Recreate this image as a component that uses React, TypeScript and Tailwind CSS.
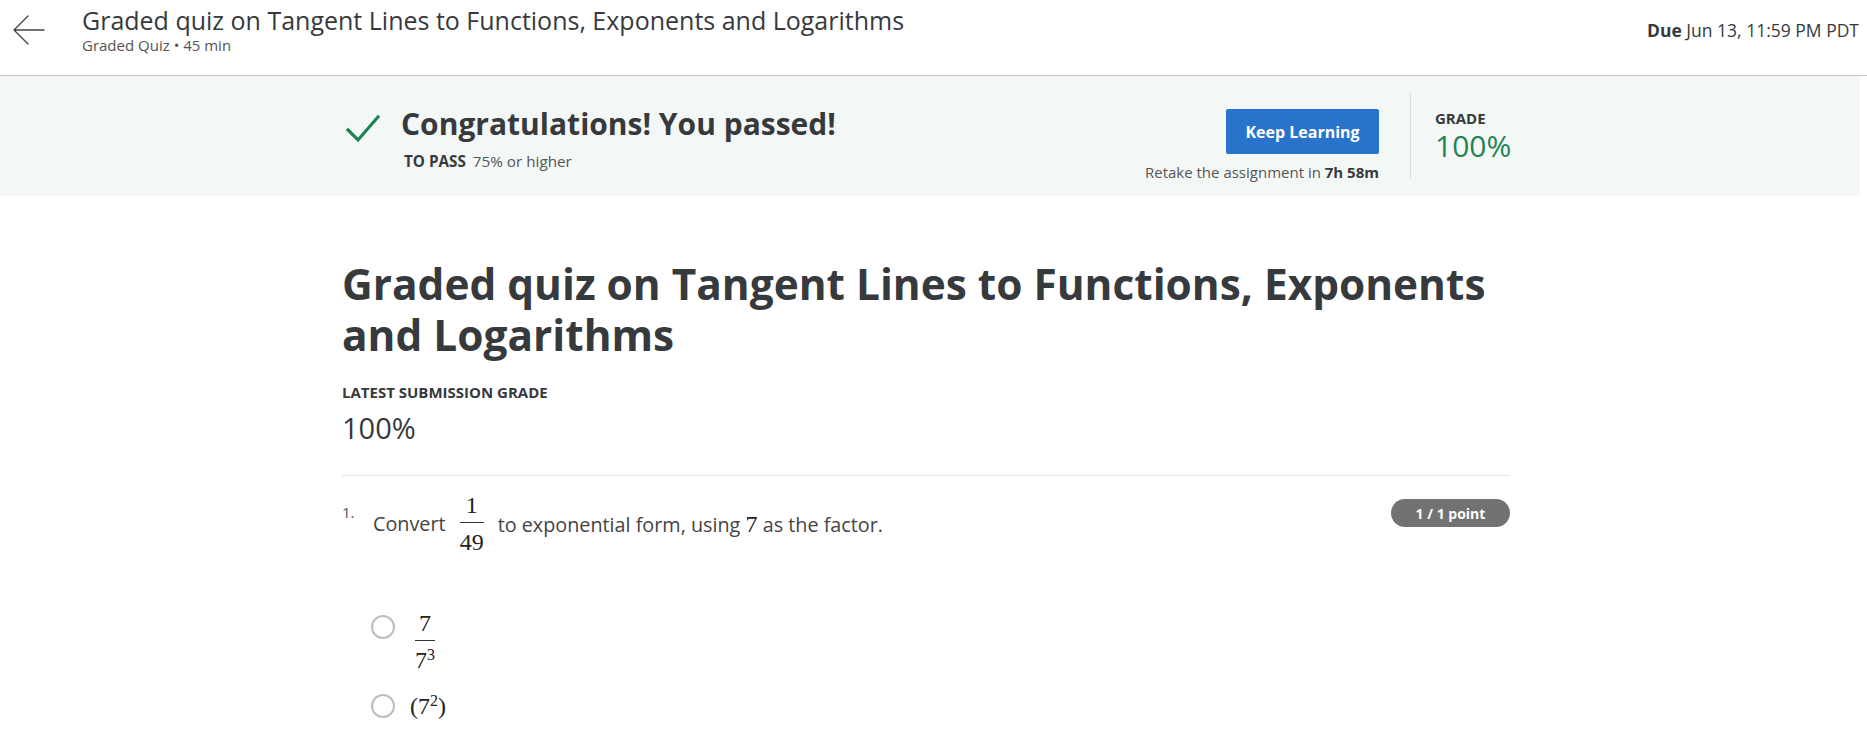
import React from "react";

const font = { fontFamily: '"Open Sans", "Noto Sans", Arial, sans-serif' };
const mathStyle = { fontFamily: '"Liberation Serif", "Times New Roman", serif' };

function Frac({ num, den, className }: { num: React.ReactNode; den: React.ReactNode; className: string }) {
  return (
    <span style={mathStyle} className={className}>
      <span className="block pb-[4px] text-center leading-[26px]">{num}</span>
      <span className="block h-[1px] w-full bg-[#333]" />
      <span className="block pt-[6px] text-center leading-[26px]">{den}</span>
    </span>
  );
}

function Radio({ className }: { className: string }) {
  return <span className={className} />;
}

export default function App() {
  return (
    <div style={font} className="min-h-[736px] w-full bg-white text-[#373a3c]">
      {/* Header */}
      <header className="flex h-[76px] items-start border-b border-[#c8c8c8]">
        <div className="flex h-[60px] w-[82px] shrink-0 items-center pl-[13px]">
          <svg width="32" height="30" viewBox="0 0 32 30" fill="none" stroke="#444" strokeWidth="1.4" strokeLinecap="round" strokeLinejoin="round">
            <path d="M31 15H2M15 1L1 15l14 14" />
          </svg>
        </div>
        <div className="flex-1 pt-[5px]">
          <div className="text-[25px] leading-[30px] text-[#373a3c]">
            Graded quiz on Tangent Lines to Functions, Exponents and Logarithms
          </div>
          <div className="text-[15px] leading-[20px] text-[#555]">Graded Quiz • 45 min</div>
        </div>
        <div className="pr-[8px] pt-[18px] text-[17.5px] leading-[24px] text-[#373a3c]">
          <span className="font-bold">Due</span> Jun 13, 11:59 PM PDT
        </div>
      </header>

      {/* Passed banner */}
      <div className="mr-[7px] h-[120px] bg-[#f3f8f6]">
        <div className="ml-[342px] flex w-[1168px] pt-[19px]">
          <div className="flex flex-1 items-start pt-[8px]">
            <svg className="ml-[2px] mt-[10px] shrink-0" width="38" height="30" viewBox="0 0 38 30" fill="none" stroke="#1f8354" strokeWidth="3.2" strokeLinecap="square">
              <path d="M4 17l10 10L34 4" />
            </svg>
            <div className="ml-[19px]">
              <div className="text-[30px] font-bold leading-[42px] text-[#373a3c]">Congratulations! You passed!</div>
              <div className="mt-[6px] pl-[3px] text-[15.25px] leading-[20px] text-[#555]">
                <span className="font-bold text-[#373a3c]">TO PASS</span>
                <span className="ml-[7px]">75% or higher</span>
              </div>
            </div>
          </div>
          <div className="flex flex-col items-end pt-[14px]">
            <button className="h-[45px] w-[153px] rounded-[2px] bg-[#2a73cc] text-[16px] font-bold text-white">
              Keep Learning
            </button>
            <div className="mt-[8px] text-[15px] leading-[20px] text-[#555]">
              Retake the assignment in <span className="font-bold text-[#373a3c]">7h 58m</span>
            </div>
          </div>
          <div className="ml-[31px] mr-[24px] mt-[-2px] h-[85px] w-[1px] bg-[#dcdcdc]" />
          <div className="w-[75px] pt-[15px]">
            <div className="text-[15px] font-bold leading-[16px] text-[#373a3c]">GRADE</div>
            <div className="mt-[2px] text-[30px] leading-[36px] text-[#1f8354]">100%</div>
          </div>
        </div>
      </div>

      {/* Main content */}
      <main className="ml-[342px] w-[1168px]">
        <h1 className="mt-[62px] text-[42.4px] font-bold leading-[51px] text-[#373a3c]">
          Graded quiz on Tangent Lines to Functions, Exponents and Logarithms
        </h1>
        <div className="mt-[22px] text-[15px] font-bold leading-[20px] text-[#373a3c]">LATEST SUBMISSION GRADE</div>
        <div className="mt-[8px] text-[29px] leading-[36px] text-[#373a3c]">100%</div>
        <div className="mt-[29px] h-[1px] bg-[#e5e5e5]" />

        <div className="mt-[16px] flex items-start">
          <div className="w-[31px] pt-[10px] text-[15px] leading-[20px] text-[#555]">1.</div>
          <div className="flex flex-1 items-center text-[19.8px] text-[#444]">
            <span>Convert</span>
            <Frac num="1" den="49" className="mx-[11px] inline-flex flex-col px-[3px] text-[24px] text-[#222]" />
            <span>
              to exponential form, using{" "}
              <span style={mathStyle} className="text-[24px] text-[#222]">
                7
              </span>{" "}
              as the factor.
            </span>
          </div>
          <div className="mt-[7px] flex h-[28px] w-[119px] items-center justify-center rounded-full bg-[#727272] text-[14px] font-bold text-white">
            1 / 1 point
          </div>
        </div>

        <div className="ml-[29px] mt-[55px] flex flex-col">
          <div className="flex items-start gap-[18px]">
            <Radio className="mt-[5px] block h-[24px] w-[24px] shrink-0 rounded-full border-[2.5px] border-[#bdbdbd] bg-white" />
            <Frac
              num="7"
              den={
                <span>
                  7<sup className="text-[16px]">3</sup>
                </span>
              }
              className="inline-flex flex-col px-[2px] text-[24px] text-[#222]"
            />
          </div>
          <div className="mt-[19px] flex h-[28px] items-center gap-[15px]">
            <Radio className="block h-[24px] w-[24px] shrink-0 rounded-full border-[2.5px] border-[#bdbdbd] bg-white" />
            <span style={mathStyle} className="text-[24px] leading-[28px] text-[#222]">
              (7<sup className="text-[16px]">2</sup>)
            </span>
          </div>
        </div>
      </main>
    </div>
  );
}
